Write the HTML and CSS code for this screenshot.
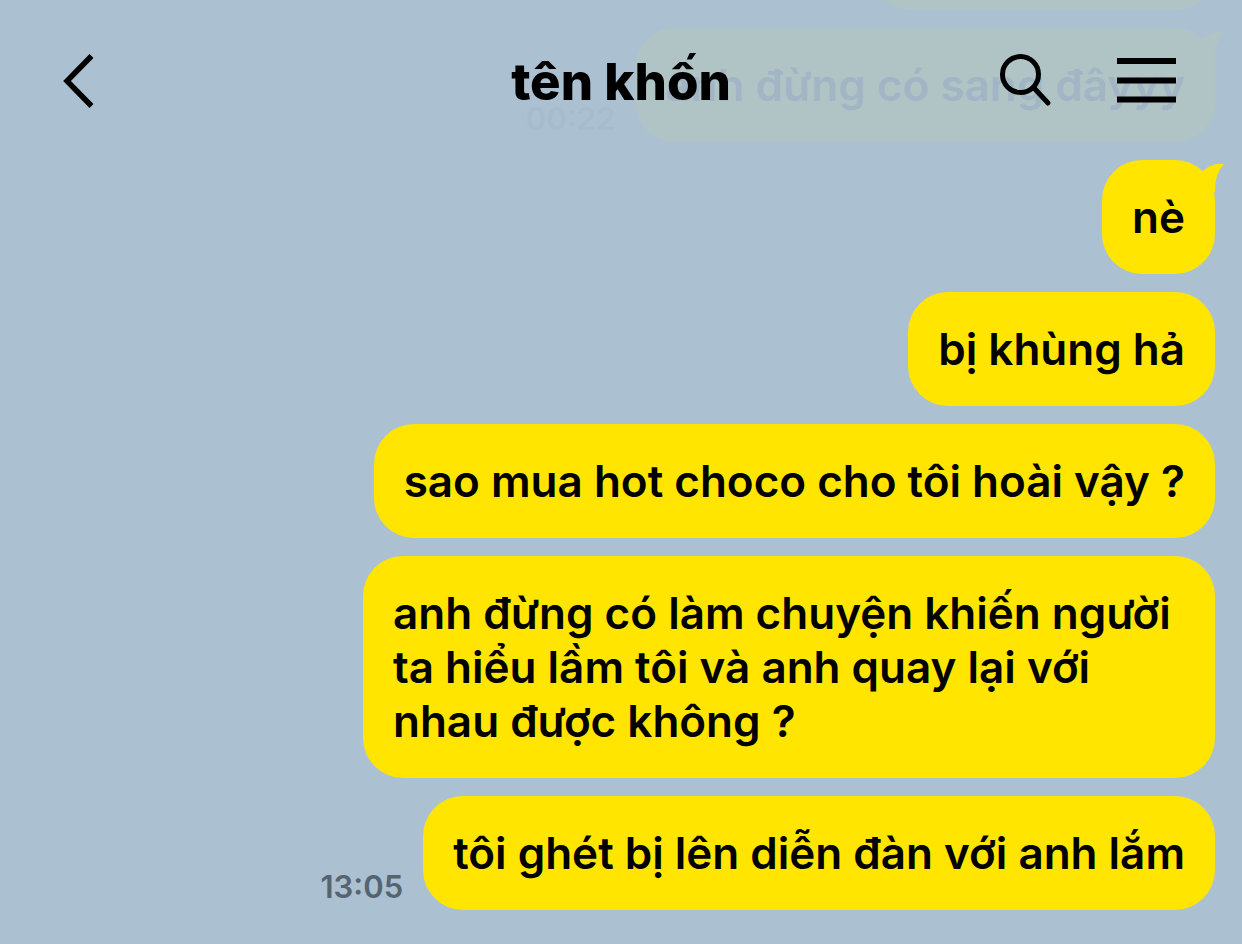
FILE: index.html
```html
<!DOCTYPE html>
<html lang="vi">
<head>
  <meta charset="utf-8">
  <meta name="viewport" content="width=device-width, initial-scale=1">
  <title>tên khốn</title>
  <link rel="stylesheet" href="styles.css">
</head>
<body>
  <div class="chat">
    <header class="topbar">
      <div class="side">
        <button class="icon-button" type="button" aria-label="Quay lại">
          <svg width="60" height="60" viewBox="0 0 60 60" fill="none" stroke="#000" stroke-width="5.500"><path d="M43.500 6 19 31 43.500 56"/></svg>
        </button>
      </div>
      <h1 class="title">tên khốn</h1>
      <div class="side side-end">
        <button class="icon-button" type="button" aria-label="Tìm kiếm">
          <svg width="60" height="60" viewBox="0 0 60 60" fill="none" stroke="#000" stroke-width="5" stroke-linecap="round"><circle cx="25.500" cy="24.500" r="18"/><path d="M39 38 53 53"/></svg>
        </button>
        <button class="icon-button icon-button-menu" type="button" aria-label="Menu">
          <svg width="60" height="60" viewBox="0 0 60 60" fill="#000"><path d="M0 8h59v6H0zM0 27.500h59v6H0zM0 46.500h59v6H0z"/></svg>
        </button>
      </div>
    </header>
    <main class="thread">
      <div class="message"><div class="bubble bubble-cut"></div></div>
      <div class="message">
        <time class="time">00:22</time>
        <div class="bubble">anh đừng có sang đâyyy<svg class="tail" width="24" height="32" viewBox="0 0 24 32"><path d="M0 13C7 6 14 3 23 4 17 11 14 18 14 32H0z"/></svg></div>
      </div>
      <div class="message">
        <div class="bubble">nè<svg class="tail" width="24" height="32" viewBox="0 0 24 32"><path d="M0 13C7 6 14 3 23 4 17 11 14 18 14 32H0z"/></svg></div>
      </div>
      <div class="message"><div class="bubble">bị khùng hả</div></div>
      <div class="message"><div class="bubble">sao mua hot choco cho tôi hoài vậy ?</div></div>
      <div class="message"><div class="bubble">anh đừng có làm chuyện khiến người ta hiểu lầm tôi và anh quay lại với nhau được không ?</div></div>
      <div class="message">
        <time class="time">13:05</time>
        <div class="bubble">tôi ghét bị lên diễn đàn với anh lắm</div>
      </div>
    </main>
  </div>
</body>
</html>
```
FILE: styles.css
```css
* {
  box-sizing: border-box;
}

body {
  margin: 0;
  background: #abc0d1;
  color: #000;
  font-family: Inter, "Liberation Sans", sans-serif;
}

.chat {
  position: relative;
  height: 100vh;
  overflow: hidden;
}

.topbar {
  position: absolute;
  z-index: 1;
  top: 0;
  left: 0;
  right: 0;
  display: flex;
  align-items: center;
  padding: 50px 48px 36px;
  background: rgba(171, 192, 209, 0.94);
}

.side {
  display: flex;
  flex: 1;
  gap: 62px;
}

.side-end {
  justify-content: flex-end;
}

.icon-button {
  display: block;
  padding: 0;
  border: 0;
  background: none;
}

.icon-button-menu {
  padding-right: 17px;
}

.icon-button svg {
  display: block;
}

.title {
  margin: 0;
  padding-top: 4px;
  font-size: 51px;
  font-weight: 800;
  line-height: 56px;
}

.thread {
  display: flex;
  flex-direction: column;
  justify-content: flex-end;
  gap: 18px;
  height: 100%;
  padding: 0 27px 34px;
}

.message {
  display: flex;
  justify-content: flex-end;
  align-items: flex-end;
  gap: 20px;
}

.bubble {
  position: relative;
  max-width: 852px;
  min-height: 114px;
  padding: 30px;
  border-radius: 40px;
  background: #ffe500;
  font-size: 44px;
  font-weight: 600;
  line-height: 54px;
}

.bubble-cut {
  width: 344px;
}

.tail {
  position: absolute;
  top: 0;
  right: -10px;
  fill: #ffe500;
}

.time {
  padding-bottom: 5px;
  color: #55646f;
  font-size: 31px;
  font-weight: 600;
  line-height: 36px;
}
```
